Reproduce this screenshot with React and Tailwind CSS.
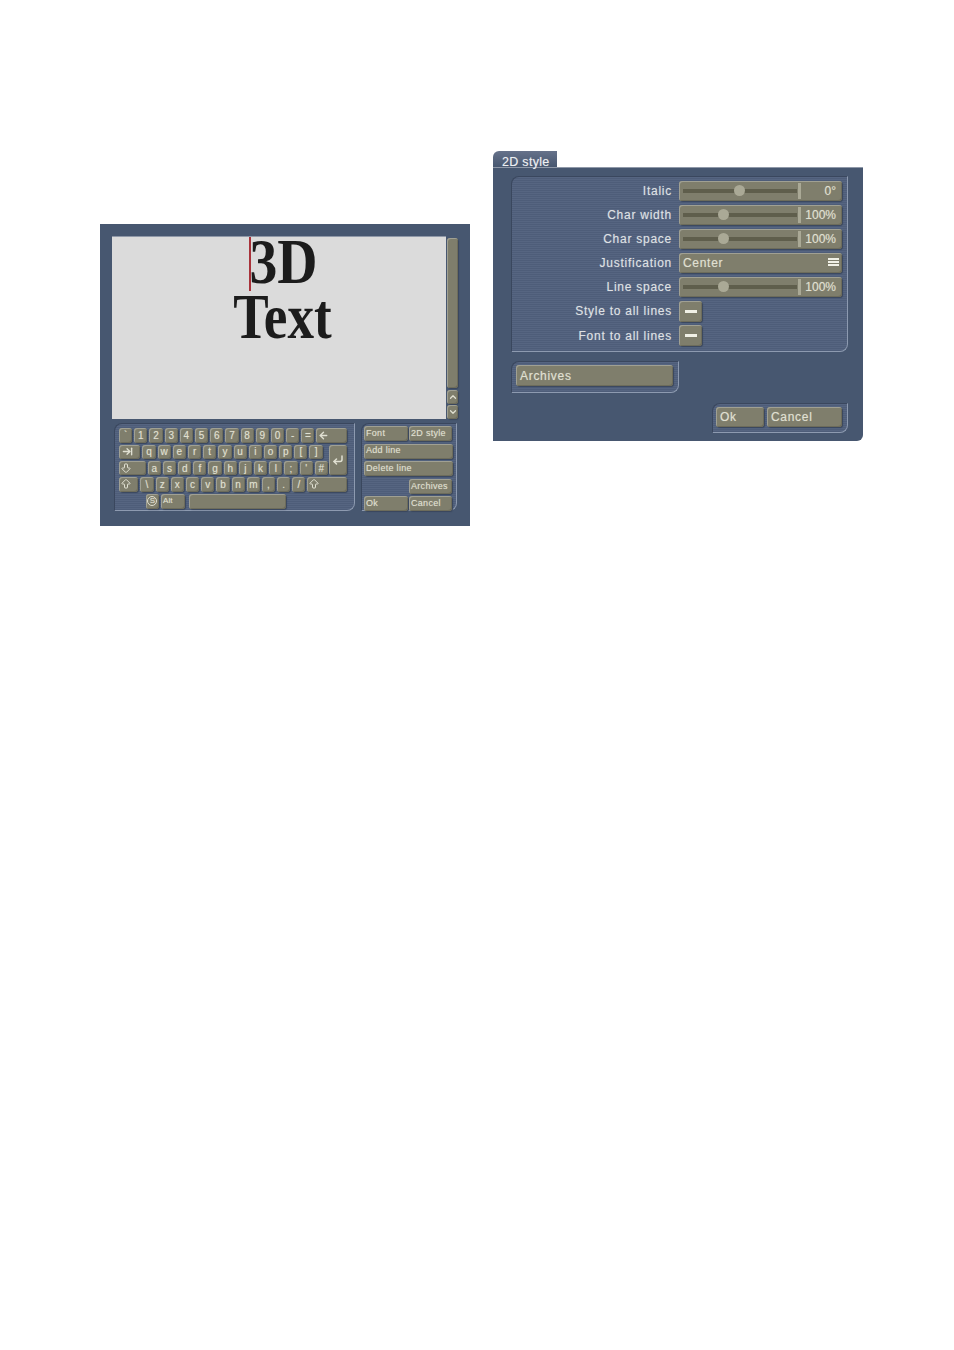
import React from 'react';
import {
  ArrowBigDown,
  ArrowBigUp,
  ArrowLeft,
  ArrowRightToLine,
  ChevronDown,
  ChevronUp,
  CornerDownLeft,
} from 'lucide-react';

const stripes =
  'bg-[repeating-linear-gradient(0deg,#4e5d79_0px,#4e5d79_1px,#566581_1px,#566581_2px)]';

// Raised olive button used everywhere in the dialog
function Key({ className = '', children }) {
  return (
    <div
      className={`flex items-center shrink-0 rounded-[3px] bg-[#7f7e6c] text-[#e0e0d2] [text-shadow:0_0_1px_#d8d8c880] shadow-[inset_1px_1px_0_#a0a093,inset_-1px_-1px_0_#6d6c5b,1px_1px_1px_#3a465c] ${className}`}
    >
      {children}
    </div>
  );
}

function Group({ className = '', children }) {
  return (
    <div
      className={`${stripes} rounded-br-[8px] rounded-tl-[8px] border-t border-l border-t-[#3a475e] border-l-[#3a475e] border-b border-r border-b-[#8d9ab0] border-r-[#8d9ab0] ${className}`}
    >
      {children}
    </div>
  );
}

function LetterKey({ label, className = 'w-[13.2px] justify-center' }) {
  return <Key className={`h-full text-[10px] ${className}`}>{label}</Key>;
}

function Keyboard() {
  return (
    <Group className="w-[241px] h-[88px] pt-[4px] pl-[4px] flex flex-col gap-[1.6px]">
      <div className="flex gap-[2px] h-[15px]">
        {['`', '1', '2', '3', '4', '5', '6', '7', '8', '9', '0', '-', '='].map((k) => (
          <LetterKey key={k} label={k} />
        ))}
        <LetterKey className="w-[31px] pl-[2px]" label={<ArrowLeft size={11} strokeWidth={3} />} />
      </div>
      <div className="flex gap-[2px]">
        <div className="w-[208px] flex flex-col gap-[1.6px]">
          <div className="flex gap-[2px] h-[14.6px]">
            <LetterKey className="w-[21.4px] pl-[3px]" label={<ArrowRightToLine size={11} strokeWidth={3} />} />
            {['q', 'w', 'e', 'r', 't', 'y', 'u', 'i', 'o', 'p', '[', ']'].map((k) => (
              <LetterKey key={k} label={k} />
            ))}
          </div>
          <div className="flex gap-[2px] h-[14.6px]">
            <LetterKey className="w-[26.7px] pl-[1px]" label={<ArrowBigDown size={12} strokeWidth={2} />} />
            {['a', 's', 'd', 'f', 'g', 'h', 'j', 'k', 'l', ';', "'", '#'].map((k) => (
              <LetterKey key={k} label={k} />
            ))}
          </div>
        </div>
        <Key className="w-[18px] h-[30.8px] justify-center">
          <CornerDownLeft size={12} strokeWidth={3} />
        </Key>
      </div>
      <div className="flex gap-[2px] h-[15px]">
        <LetterKey className="w-[19.4px] pl-[1px]" label={<ArrowBigUp size={12} strokeWidth={2} />} />
        {['\\', 'z', 'x', 'c', 'v', 'b', 'n', 'm', ',', '.', '/'].map((k) => (
          <LetterKey key={k} label={k} />
        ))}
        <LetterKey className="w-[40px] pl-[1px]" label={<ArrowBigUp size={12} strokeWidth={2} />} />
      </div>
      <div className="flex gap-[2px] h-[15px] ml-[26.7px]">
        <LetterKey
          className="w-[13.4px] justify-center"
          label={
            <span className="w-[10px] h-[10px] rounded-full border border-[#e0e0d2] flex items-center justify-center text-[8px]">
              S
            </span>
          }
        />
        <LetterKey className="w-[23.6px] pl-[2px] !text-[8px]" label="Alt" />
        <LetterKey className="w-[97px] ml-[2.7px]" label="" />
      </div>
    </Group>
  );
}

function SideButton({ className = '', children }) {
  return <Key className={`h-[15px] pl-[2px] text-[9px] tracking-[0.3px] ${className}`}>{children}</Key>;
}

function SideButtons() {
  return (
    <Group className="w-[96px] h-[88px] pt-[2px] pl-[2px] flex flex-col gap-[2.6px]">
      <div className="flex gap-[1px]">
        <SideButton className="w-[44px]">Font</SideButton>
        <SideButton className="w-[43px]">2D style</SideButton>
      </div>
      <SideButton className="w-[89px]">Add line</SideButton>
      <SideButton className="w-[89px]">Delete line</SideButton>
      <SideButton className="w-[43px] ml-[45px]">Archives</SideButton>
      <div className="flex gap-[1px]">
        <SideButton className="w-[44px]">Ok</SideButton>
        <SideButton className="w-[43px]">Cancel</SideButton>
      </div>
    </Group>
  );
}

function EditorPanel() {
  return (
    <div className="w-[370px] h-[302px] mt-[73px] bg-[#475770] pt-[12px] pl-[12px]">
      <div className="flex gap-[1px]">
        <div className="relative w-[334px] h-[183px] bg-[#dbdbdb] border-t border-[#8f98a8] font-['Liberation_Serif',serif] font-bold text-[64px] leading-[55px] text-[#1c1c1c] text-center">
          <div className="ml-[9px] -mt-[3px] scale-x-[0.87]">3D</div>
          <div className="ml-[7px] scale-x-[0.83]">Text</div>
          <div className="absolute left-[137px] top-0 w-[1.5px] h-[54px] bg-[#a8323a]" />
        </div>
        <div className="w-[12px] flex flex-col gap-[1px] pt-[2px]">
          <Key className="h-[150px] w-[11px]" />
          <Key className="h-[14px] w-[11px] justify-center mt-[1px]">
            <ChevronUp size={10} strokeWidth={3} />
          </Key>
          <Key className="h-[14px] w-[11px] justify-center">
            <ChevronDown size={10} strokeWidth={3} />
          </Key>
        </div>
      </div>
      <div className="flex gap-[6px] mt-[4px] ml-[2px]">
        <Keyboard />
        <SideButtons />
      </div>
    </div>
  );
}

function Label({ children }) {
  return (
    <div className="w-[160px] shrink-0 text-right text-[12px] tracking-[0.75px] text-[#dfe1e4] [text-shadow:0_0_1px_#c8ccd480]">
      {children}
    </div>
  );
}

function SliderRow({ label, value, thumb }) {
  return (
    <div className="flex items-center gap-[7px] h-[20px]">
      <Label>{label}</Label>
      <Key className="w-[163px] h-[20px] pl-[4px]">
        <div className="relative w-[114px] h-[4px] bg-[#5f5e4c]">
          <div className={`absolute top-[-4px] w-[11px] h-[11px] rounded-full bg-[#aaa996] ${thumb}`} />
        </div>
        <div className="w-[3px] h-[16px] ml-[1px] bg-[#aaa996]" />
        <div className="flex-1 text-right pr-[6px] text-[12px]">{value}</div>
      </Key>
    </div>
  );
}

function ToggleRow({ label }) {
  return (
    <div className="flex items-center gap-[7px] h-[20px]">
      <Label>{label}</Label>
      <Key className="w-[23px] h-[21px] justify-center">
        <div className="w-[12px] h-[3px] bg-[#f0f0e6]" />
      </Key>
    </div>
  );
}

function StylePanel() {
  return (
    <div className="w-[370px] font-['Liberation_Sans',sans-serif]">
      <div className="w-[64px] h-[16px] rounded-tl-[6px] bg-linear-to-b from-[#66728a] to-[#475770] pl-[9px] text-[12.5px] leading-[22px] tracking-[0.3px] text-[#eef0f2] [text-shadow:0_0_1px_#d8dce280]">
        2D style
      </div>
      <div className="h-[274px] bg-[#475770] border-t border-[#8f98a8] rounded-br-[6px] pl-[18px] pt-[8px]">
        <Group className="w-[337px] h-[176px] pt-[3.5px] flex flex-col gap-[4.2px]">
          <SliderRow label="Italic" value="0°" thumb="left-[51px]" />
          <SliderRow label="Char width" value="100%" thumb="left-[35px]" />
          <SliderRow label="Char space" value="100%" thumb="left-[35px]" />
          <div className="flex items-center gap-[7px] h-[20px]">
            <Label>Justification</Label>
            <Key className="relative w-[163px] h-[20px] pl-[4px] text-[12px] tracking-[0.7px]">
              Center
              <div className="absolute right-[3px] top-[5px] w-[11px] flex flex-col gap-[1px]">
                <div className="h-[2px] bg-[#f0f0e6]" />
                <div className="h-[2px] bg-[#f0f0e6]" />
                <div className="h-[2px] bg-[#f0f0e6]" />
              </div>
            </Key>
          </div>
          <SliderRow label="Line space" value="100%" thumb="left-[35px]" />
          <ToggleRow label="Style to all lines" />
          <ToggleRow label="Font to all lines" />
        </Group>
        <Group className="w-[168px] h-[32px] mt-[9px] pt-[3px] pl-[4px]">
          <Key className="w-[157px] h-[21px] pl-[4px] text-[12px] tracking-[0.7px]">Archives</Key>
        </Group>
        <Group className="w-[136px] h-[30px] mt-[10px] ml-[201px] pt-[3px] pl-[3px] flex gap-[3px]">
          <Key className="w-[48px] h-[20px] pl-[4px] text-[12px] tracking-[0.7px]">Ok</Key>
          <Key className="w-[75px] h-[20px] pl-[4px] text-[12px] tracking-[0.7px]">Cancel</Key>
        </Group>
      </div>
    </div>
  );
}

export default function App() {
  return (
    <div className="w-[954px] h-[1350px] bg-white flex items-start gap-[23px] pl-[100px] pt-[151px] font-['Liberation_Sans',sans-serif]">
      <EditorPanel />
      <StylePanel />
    </div>
  );
}
